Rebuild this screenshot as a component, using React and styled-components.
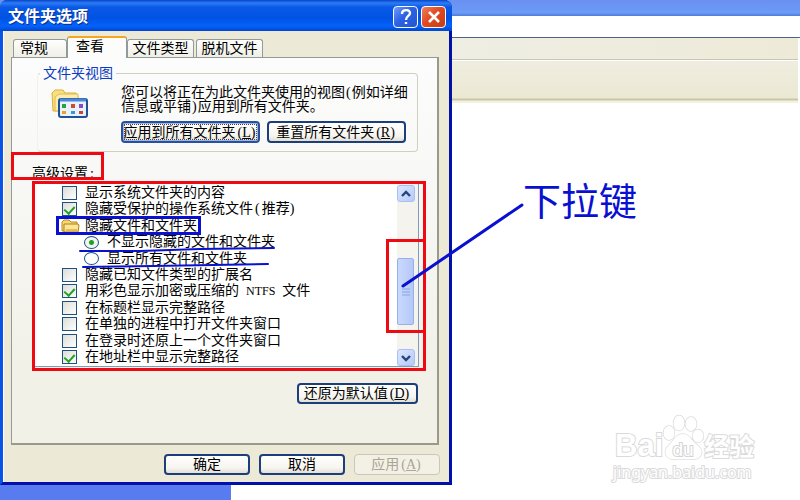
import React from 'react';
import styled, { createGlobalStyle, css } from 'styled-components';

const GlobalStyle = createGlobalStyle`
  * { box-sizing: border-box; }
  body {
    margin: 0;
    background: #fff;
    color: #000;
    font-family: "Noto Sans CJK SC", sans-serif;
    font-size: 14px;
    line-height: 16px;
  }
  button, input, fieldset, legend { font: inherit; margin: 0; padding: 0; }
`;

const Desktop = styled.div`
  position: relative;
  min-height: 100vh;
  display: flex;
  flex-direction: column;
  overflow: hidden;
`;
const BackTitle = styled.div`
  height: 16px;
  background: linear-gradient(#6990f2, #6b9cf6 80%, #4f7ad8);
`;
const BackBlank = styled.div`
  height: 22px;
  border-bottom: 1px solid #50628c;
`;
const BackMenu = styled.div`
  height: 22px;
  margin-right: 2px;
  background: linear-gradient(90deg, #efeee4 55%, #edead8);
  border-bottom: 1px solid #c9c6b6;
`;
const BackTools = styled.div`
  height: 43px;
  margin-right: 2px;
  border-top: 1px solid #fff;
  background: linear-gradient(#efeddf, #ebe8d3 37px, #cbc7a6 38px, #cbc7a6 39px, #f3f1e2 40px);
`;
const BackBottom = styled.div`
  margin-top: auto;
  width: 231px;
  height: 15px;
  background: #587bf0;
`;

const Dialog = styled.section`
  position: absolute;
  left: 0;
  top: 0;
  width: 452px;
  border: solid #0010a8;
  border-width: 0 3px 3px;
  border-left-color: #0a55e6;
  border-radius: 7px 8px 0 0;
  background: #0a55e6;
`;
const TitleBar = styled.header`
  display: flex;
  align-items: center;
  gap: 3px;
  height: 31px;
  margin: 0 -3px;
  padding: 2px 6px 0 8px;
  border-radius: 7px 8px 0 0;
  background: linear-gradient(#0844c8, #2d7cf6 3px, #0a5ae6 7px, #0052e4 18px, #0462fa 26px, #0046d0);
`;
const Title = styled.h1`
  flex: 1;
  margin: 0;
  padding-bottom: 3px;
  color: #fff;
  font-size: 16px;
  line-height: 20px;
  font-weight: 700;
  text-shadow: 1px 1px 0 #0a2f8c;
`;
const CaptionButton = styled.button`
  display: grid;
  place-items: center;
  width: 25px;
  height: 22px;
  border: 1px solid #fff;
  border-radius: 4px;
  background: ${p => (p.$close ? 'linear-gradient(135deg, #f08060, #e04a22 45%, #c83c14)' : 'linear-gradient(135deg, #6f9cf8, #2c62e4 45%, #2356d2)')};
`;
const Body = styled.div`
  padding: 5px 10px 7px 7px;
  border: solid #fff;
  border-width: 0 0 0 1px;
  background: #ece9d6;
`;
const Tabs = styled.div`
  display: flex;
  align-items: flex-end;
  height: 21px;
  padding-left: 2px;
`;
const Tab = styled.button`
  width: ${p => p.$w}px;
  height: 18px;
  margin-right: ${p => p.$gap || 0}px;
  border: 1px solid #919b9c;
  border-bottom: 0;
  border-radius: 3px 3px 0 0;
  background: linear-gradient(#fefefc, #f0efe6);
  text-align: ${p => (p.$left ? 'left' : 'center')};
  padding: 0 0 3px ${p => (p.$left ? 6 : 0)}px;
  line-height: 14px;
  white-space: nowrap;
  ${p => p.$active && css`
    position: relative;
    height: 22px;
    margin-bottom: -1px;
    border-top: 2px solid #f5a623;
    background: #fcfcfa;
    padding: 0 0 6px 8px;
  `}
`;
const Panel = styled.div`
  height: 388px;
  padding: 7px 20px 0;
  border: 1px solid #919b9c;
  border-right: 2px solid #9a9a8c;
  border-bottom: 2px solid #9a9a8c;
  background: linear-gradient(#fcfcfc, #f8f8f6 30%, #f2f1e8 80%);
`;
const Group = styled.fieldset`
  position: relative;
  min-width: 0;
  height: 87px;
  margin: 0 -1px 0 5px;
  border: 1px solid #d0d0bf;
  border-left-color: #f2f2ec;
  border-radius: 4px;
`;
const Legend = styled.legend`
  margin-left: 2px;
  padding: 0 3px 3px;
  color: #0a3cc0;
  line-height: 14px;
`;
const GroupRow = styled.div`
  display: flex;
  gap: 32px;
  padding: 2px 9px 0 13px;
`;
const GroupText = styled.div`
  flex: 1;
`;
const Description = styled.p`
  margin: 0 0 9px;
  line-height: 14px;
  white-space: nowrap;
`;
const ButtonRow = styled.div`
  display: flex;
  gap: ${p => p.$gap}px;
  justify-content: ${p => (p.$end ? 'flex-end' : 'flex-start')};
  padding-top: ${p => p.$top || 0}px;
  margin-right: ${p => (p.$flush ? -1 : 0)}px;
`;
const PushButton = styled.button`
  flex: none;
  width: ${p => p.$w}px;
  height: ${p => (p.$tall ? 22 : 21)}px;
  padding-bottom: 3px;
  border: 2px solid #1c3f7c;
  border-radius: 4px;
  background: linear-gradient(#fff, #f6f5f0 70%, #e2dfd2);
  line-height: 14px;
  white-space: nowrap;
  ${p => p.$focus && css`
    border-color: #2a4f9c;
    box-shadow: inset 0 0 0 1px #9bb8ee;
    outline: 1px dotted #444;
    outline-offset: -4px;
  `}
  &:disabled {
    border: 1px solid #c9c7ba;
    background: #f3f1e6;
    color: #a8a595;
  }
`;
const Latin = styled.span`
  margin: 0 ${p => p.$space || 0}px;
  font-family: "Liberation Serif", serif;
  font-size: ${p => (p.$small ? 12 : 14)}px;
  line-height: 0;
`;
const AdvancedLabel = styled.div`
  margin: 12px 0 4px;
`;
const ListBox = styled.div`
  display: flex;
  height: 183px;
  margin: 0 -2px 0 3px;
  border: solid #7f9db9;
  border-width: 0 1px 1px 0;
  background: #fff;
`;
const Items = styled.div`
  flex: 1;
  display: flex;
  flex-direction: column;
  justify-content: space-between;
  padding: 1px 0 1px 27px;
`;
const Item = styled.label`
  display: flex;
  align-items: center;
  gap: 8px;
  height: 16px;
  padding-left: ${p => (p.$nested ? 22 : 0)}px;
  white-space: nowrap;
`;
const ItemText = styled.span`
  padding-bottom: 4px;
`;
const Check = styled.input`
  appearance: none;
  display: grid;
  justify-content: center;
  width: 15px;
  height: 14px;
  border: 1px solid #1c5180;
  background: linear-gradient(135deg, #dcdcd7, #fff);
  &:checked::after {
    content: "";
    width: 5px;
    height: 8px;
    margin-top: 1px;
    border: solid #21a121;
    border-width: 0 2px 2px 0;
    transform: rotate(42deg);
  }
`;
const Radio = styled.input`
  appearance: none;
  width: 15px;
  height: 13px;
  border: 1px solid #1c5180;
  border-radius: 50%;
  background: ${p => (p.defaultChecked ? 'radial-gradient(circle, #21a121 2px, #f4f4f0 3px)' : '#fff')};
`;
const FolderSlot = styled.span`
  display: flex;
  width: 19px;
  margin: 0 -3px 0 -1px;
`;
const ScrollBar = styled.div`
  display: flex;
  flex-direction: column;
  width: 21px;
  padding: 1px 2px 0 0;
  background: #f5f3ee;
`;
const ScrollButton = styled.button`
  display: grid;
  place-items: center;
  width: 18px;
  height: 17px;
  border: 1px solid #a9bff0;
  border-radius: 3px;
  background: linear-gradient(135deg, #dce7ff, #b5caf8);
`;
const Track = styled.div`
  flex: 1;
  padding-top: 56px;
`;
const Thumb = styled.div`
  display: grid;
  place-items: center;
  width: 17px;
  height: 67px;
  border: 1px solid #98b0e8;
  border-radius: 2px;
  background: linear-gradient(90deg, #cad9fd, #b4c8f8);
`;

const Mark = styled.div`
  position: absolute;
  left: ${p => p.$x}px;
  top: ${p => p.$y}px;
  width: ${p => p.$w}px;
  height: ${p => p.$h}px;
  border: 3px solid ${p => p.$color || '#ee0a12'};
  pointer-events: none;
`;
const Strokes = styled.svg`
  position: absolute;
  left: 0;
  top: 0;
  pointer-events: none;
`;
const Note = styled.div`
  position: absolute;
  left: 523px;
  top: 179px;
  color: #0a10d0;
  font-size: 38px;
  line-height: 40px;
  white-space: nowrap;
`;
const Watermark = styled.div`
  position: absolute;
  right: 43px;
  bottom: 18px;
  width: 144px;
  color: #fff;
  font-family: "Liberation Sans", "Noto Sans CJK SC", sans-serif;
  -webkit-text-stroke: 2px #dadada;
  paint-order: stroke fill;
`;
const Brand = styled.div`
  display: flex;
  align-items: flex-end;
  height: 48px;
  padding-left: 2px;
  font-size: 31px;
  line-height: 32px;
  font-weight: 700;
`;
const PawMark = styled.svg`
  flex: none;
  text {
    font-size: 19px;
    font-weight: 400;
    fill: #fff;
    stroke: #d4d4d4;
    stroke-width: 2px;
  }
`;
const BrandCjk = styled.span`
  font-size: 25px;
  line-height: 30px;
`;
const Site = styled.div`
  font-family: "Noto Sans", sans-serif;
  font-size: 16px;
  line-height: 20px;
`;

const Chevron = ({ up }) => (
  <svg width="10" height="8" viewBox="0 0 10 8">
    <path d={up ? 'M1 6 5 2l4 4' : 'M1 2l4 4 4-4'} fill="none" stroke="#26437c" strokeWidth="2.4" />
  </svg>
);

const Folder = () => (
  <svg width="19" height="14" viewBox="0 0 19 14">
    <path d="M1 12V3l2-2h5l2 2h6v9z" fill="#f6d973" stroke="#b88a1c" />
    <path d="M3 13V5h14l1 1-1 7z" fill="#fbe596" stroke="#b07e18" />
    <path d="M5 11h11" stroke="#e8ba55" strokeWidth="2" />
  </svg>
);

const FolderView = () => (
  <svg width="38" height="36" viewBox="0 -5 38 36">
    <path d="M1 4l3-3h8l2 3h11l2 4v14H2z" fill="#f7df82" stroke="#dcb13c" />
    <path d="M4 22V8l4-3h19v16z" fill="#fcedaa" stroke="#dfba52" />
    <rect x="8" y="10" width="28" height="18" rx="2" fill="#e8f2fd" stroke="#225296" strokeWidth="2" />
    <path d="M9 11h26" stroke="#4c86dc" strokeWidth="3" />
    <path d="M11 15h4v4h-4z" fill="#2f9e3c" />
    <path d="M20 15h4v4h-4z" fill="#d44830" />
    <path d="M28 15h4v4h-4z" fill="#8a4ac0" />
    <path d="M11 22h4v3h-4z" fill="#f0a028" />
    <path d="M20 22h4v3h-4z" fill="#3a9ad0" />
    <path d="M28 22h4v3h-4z" fill="#d04438" />
  </svg>
);

const Paw = () => (
  <PawMark width="41" height="48" viewBox="0 0 41 48">
    <g fill="#fff" stroke="#dadada" strokeWidth="1.4">
      <ellipse cx="6" cy="19" rx="5.5" ry="7" />
      <ellipse cx="16" cy="9" rx="5.5" ry="7.5" />
      <ellipse cx="28" cy="10" rx="5.5" ry="7" />
      <ellipse cx="35" cy="22" rx="5.5" ry="6.5" />
      <path d="M20 20c6 0 8 5 12 9 5 4 8 7 6 12-3 6-11 4-18 4s-14 2-17-4c-2-5 1-8 5-12 4-5 6-9 12-9z" />
    </g>
    <text x="20" y="42" textAnchor="middle">du</text>
  </PawMark>
);

const Key = ({ children }) => <Latin $space={2}>(<u>{children}</u>)</Latin>;

const settings = [
  { type: 'check', text: '显示系统文件夹的内容' },
  { type: 'check', on: true, text: <>隐藏受保护的操作系统文件<Latin $space={2}>(</Latin>推荐<Latin>)</Latin></> },
  { type: 'folder', text: '隐藏文件和文件夹' },
  { type: 'radio', on: true, text: '不显示隐藏的文件和文件夹' },
  { type: 'radio', text: '显示所有文件和文件夹' },
  { type: 'check', text: '隐藏已知文件类型的扩展名' },
  { type: 'check', on: true, text: <>用彩色显示加密或压缩的<Latin $small $space={7}>NTFS</Latin>文件</> },
  { type: 'check', text: '在标题栏显示完整路径' },
  { type: 'check', text: '在单独的进程中打开文件夹窗口' },
  { type: 'check', text: '在登录时还原上一个文件夹窗口' },
  { type: 'check', on: true, text: '在地址栏中显示完整路径' },
];

function Setting({ item }) {
  if (item.type === 'folder') {
    return <Item as="div"><FolderSlot><Folder /></FolderSlot><ItemText>{item.text}</ItemText></Item>;
  }
  return (
    <Item $nested={item.type === 'radio'}>
      {item.type === 'radio'
        ? <Radio type="radio" name="hidden-files" defaultChecked={item.on} />
        : <Check type="checkbox" defaultChecked={item.on} />}
      <ItemText>{item.text}</ItemText>
    </Item>
  );
}

export default function App() {
  return (
    <Desktop>
      <GlobalStyle />
      <BackTitle />
      <BackBlank />
      <BackMenu />
      <BackTools />
      <BackBottom />

      <Dialog role="dialog" aria-label="文件夹选项">
        <TitleBar>
          <Title>文件夹选项</Title>
          <CaptionButton aria-label="帮助">
            <svg width="14" height="16" viewBox="0 0 14 16">
              <path d="M3 5c0-5 8-5 8-1 0 3-4 3-4 7M7 13v2" fill="none" stroke="#fff" strokeWidth="2.4" />
            </svg>
          </CaptionButton>
          <CaptionButton $close aria-label="关闭">
            <svg width="14" height="14" viewBox="0 0 14 14">
              <path d="M2 2l10 10M12 2 2 12" stroke="#fff" strokeWidth="2.6" />
            </svg>
          </CaptionButton>
        </TitleBar>
        <Body>
          <Tabs role="tablist">
            <Tab role="tab" $w={54} $left>常规</Tab>
            <Tab role="tab" $w={60} $left $active aria-selected="true">查看</Tab>
            <Tab role="tab" $w={67} $gap={2}>文件类型</Tab>
            <Tab role="tab" $w={67}>脱机文件</Tab>
          </Tabs>
          <Panel role="tabpanel">
            <Group>
              <Legend>文件夹视图</Legend>
              <GroupRow>
                <FolderView />
                <GroupText>
                  <Description>
                    您可以将正在为此文件夹使用的视图<Latin $space={1}>(</Latin>例如详细<br />
                    信息或平铺<Latin $space={1}>)</Latin>应用到所有文件夹。
                  </Description>
                  <ButtonRow $gap={7}>
                    <PushButton $w={139} $tall $focus>应用到所有文件夹<Key>L</Key></PushButton>
                    <PushButton $w={139} $tall>重置所有文件夹<Key>R</Key></PushButton>
                  </ButtonRow>
                </GroupText>
              </GroupRow>
            </Group>
            <AdvancedLabel>高级设置<Latin $space={2}>:</Latin></AdvancedLabel>
            <ListBox>
              <Items>
                {settings.map((item, i) => <Setting key={i} item={item} />)}
              </Items>
              <ScrollBar>
                <ScrollButton aria-label="向上滚动"><Chevron up /></ScrollButton>
                <Track>
                  <Thumb>
                    <svg width="8" height="8" viewBox="0 0 8 8">
                      <path d="M0 1h8M0 4h8M0 7h8" stroke="#8ba6e4" />
                    </svg>
                  </Thumb>
                </Track>
                <ScrollButton aria-label="向下滚动"><Chevron /></ScrollButton>
              </ScrollBar>
            </ListBox>
            <ButtonRow $end $top={16} $flush>
              <PushButton $w={121}>还原为默认值<Key>D</Key></PushButton>
            </ButtonRow>
          </Panel>
          <ButtonRow $end $gap={9} $top={9} $flush>
            <PushButton $w={86}>确定</PushButton>
            <PushButton $w={86}>取消</PushButton>
            <PushButton $w={86} disabled>应用<Key>A</Key></PushButton>
          </ButtonRow>
        </Body>
      </Dialog>

      <Mark $x={11} $y={152} $w={93} $h={28} />
      <Mark $x={32} $y={181} $w={394} $h={190} />
      <Mark $x={386} $y={239} $w={40} $h={94} />
      <Mark $x={56} $y={216} $w={145} $h={19} $color="#0a10d0" />
      <Strokes width="640" height="320" viewBox="0 0 640 320">
        <g fill="none" stroke="#0a10d0" strokeWidth="3" strokeLinecap="round">
          <path d="M403 286 522 205" />
          <path d="M80 251l60 0 60-2 74-1" strokeWidth="2" />
          <path d="M83 267l70-1 60-1 55-1" strokeWidth="2" />
        </g>
      </Strokes>
      <Note>下拉键</Note>
      <Watermark>
        <Brand>Bai<Paw /><BrandCjk>经验</BrandCjk></Brand>
        <Site>jingyan.baidu.com</Site>
      </Watermark>
    </Desktop>
  );
}
